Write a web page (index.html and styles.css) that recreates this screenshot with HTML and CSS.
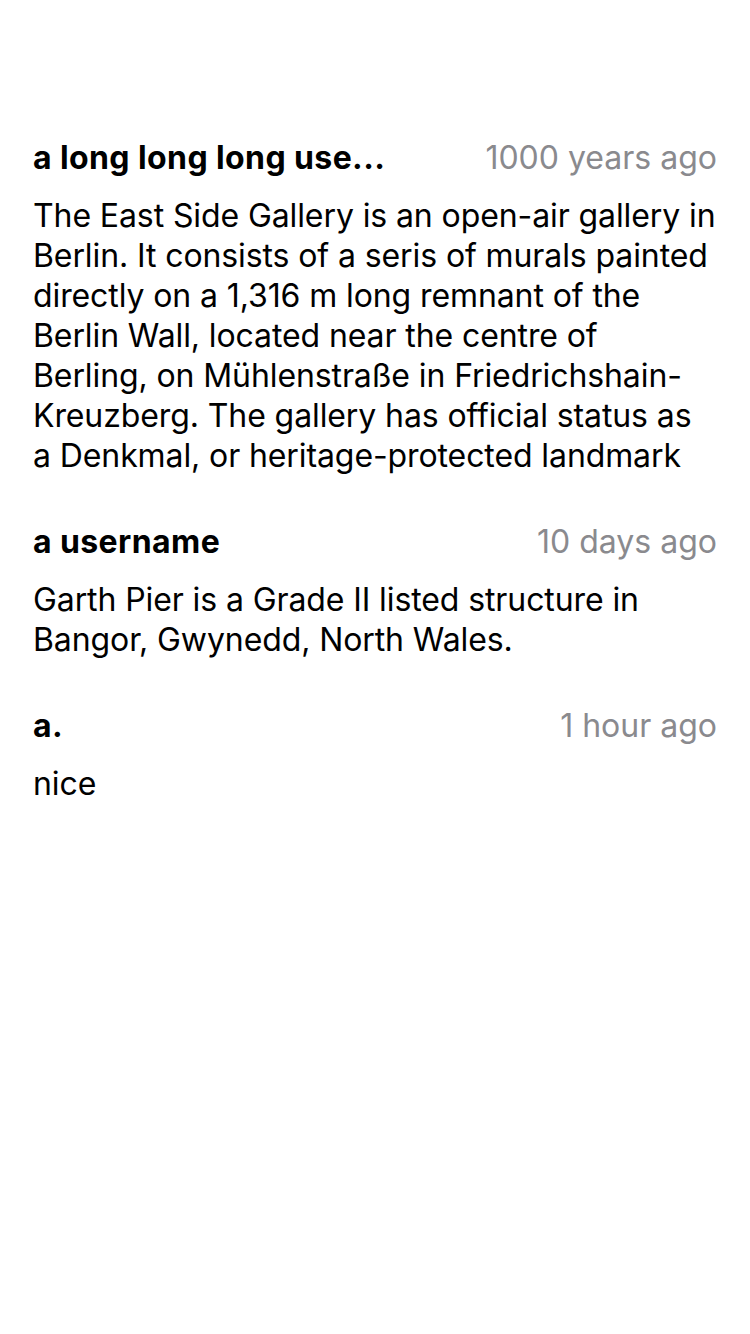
FILE: index.html
```html
<!DOCTYPE html>
<html>
<head>
<meta charset="utf-8">
<link rel="stylesheet" href="styles.css">
</head>
<body>
<main class="list">
  <article class="comment">
    <div class="head"><span class="name">a long long long use...</span><span class="time">1000 years ago</span></div>
    <p class="body">The East Side Gallery is an open-air gallery in<br>Berlin. It consists of a seris of murals painted<br>directly on a 1,316 m long remnant of the<br>Berlin Wall, located near the centre of<br>Berling, on Mühlenstraße in Friedrichshain-<br>Kreuzberg. The gallery has official status as<br>a Denkmal, or heritage-protected landmark</p>
  </article>
  <article class="comment">
    <div class="head"><span class="name">a username</span><span class="time">10 days ago</span></div>
    <p class="body">Garth Pier is a Grade II listed structure in<br>Bangor, Gwynedd, North Wales.</p>
  </article>
  <article class="comment">
    <div class="head"><span class="name">a.</span><span class="time">1 hour ago</span></div>
    <p class="body">nice</p>
  </article>
</main>
</body>
</html>
```
FILE: styles.css
```css
html, body {
  margin: 0;
  padding: 0;
  background: #ffffff;
}
body {
  width: 750px;
  height: 1334px;
  font-family: Inter, "Liberation Sans", sans-serif;
  color: #000;
}
.list {
  display: flex;
  flex-direction: column;
  gap: 45px;
  padding: 137px 33px 0 33px;
}
.comment {
  display: flex;
  flex-direction: column;
  gap: 18px;
}
.head {
  display: flex;
  justify-content: space-between;
  align-items: center;
  height: 41px;
  line-height: 41px;
}
.name {
  font-size: 32px;
  font-weight: 700;
  letter-spacing: 0.4px;
}
.time {
  font-size: 32px;
  color: #8a8a8e;
}
.body {
  margin: 0;
  font-size: 32px;
  line-height: 40px;
  letter-spacing: -0.1px;
}
```
